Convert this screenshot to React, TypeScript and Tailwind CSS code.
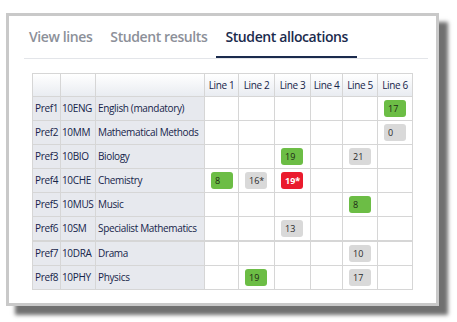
import React from "react";

type Badge = { line: number; value: string; tone: "green" | "gray" | "red" };

const rows: { pref: string; code: string; name: string; badges: Badge[] }[] = [
  { pref: "Pref1", code: "10ENG", name: "English (mandatory)", badges: [{ line: 6, value: "17", tone: "green" }] },
  { pref: "Pref2", code: "10MM", name: "Mathematical Methods", badges: [{ line: 6, value: "0", tone: "gray" }] },
  {
    pref: "Pref3",
    code: "10BIO",
    name: "Biology",
    badges: [
      { line: 3, value: "19", tone: "green" },
      { line: 5, value: "21", tone: "gray" },
    ],
  },
  {
    pref: "Pref4",
    code: "10CHE",
    name: "Chemistry",
    badges: [
      { line: 1, value: "8", tone: "green" },
      { line: 2, value: "16*", tone: "gray" },
      { line: 3, value: "19*", tone: "red" },
    ],
  },
  { pref: "Pref5", code: "10MUS", name: "Music", badges: [{ line: 5, value: "8", tone: "green" }] },
  { pref: "Pref6", code: "10SM", name: "Specialist Mathematics", badges: [{ line: 3, value: "13", tone: "gray" }] },
  { pref: "Pref7", code: "10DRA", name: "Drama", badges: [{ line: 5, value: "10", tone: "gray" }] },
  {
    pref: "Pref8",
    code: "10PHY",
    name: "Physics",
    badges: [
      { line: 2, value: "19", tone: "green" },
      { line: 5, value: "17", tone: "gray" },
    ],
  },
];

const lines = [1, 2, 3, 4, 5, 6];

const cols = "grid grid-cols-[27px_34px_108px_33px_35px_35px_31px_34px_34px] gap-px";

const toneClass = {
  green: "bg-[#6cbd45] text-[#1d2a16]",
  gray: "bg-[#d9d9d9] text-[#2a2a2a]",
  red: "bg-[#ea1b2d] text-white font-bold",
};

function Row({ row }: { row: (typeof rows)[number] }) {
  return (
    <>
      <div className="h-[23px] bg-[#e7e9ee] px-[2px] flex items-center">{row.pref}</div>
      <div className="h-[23px] bg-[#e7e9ee] px-[1px] flex items-center">{row.code}</div>
      <div className="h-[23px] bg-[#e7e9ee] px-[2px] flex items-center whitespace-nowrap">{row.name}</div>
      {lines.map((l) => {
        const b = row.badges.find((x) => x.line === l);
        return (
          <div key={l} className="h-[23px] bg-white pl-[6px] flex items-center">
            {b && (
              <span
                className={`w-[22px] h-[17px] rounded-[3px] pl-[4px] flex items-center text-[9px] tracking-normal leading-none ${toneClass[b.tone]}`}
              >
                {b.value}
              </span>
            )}
          </div>
        );
      })}
    </>
  );
}

export default function App() {
  return (
    <div className="w-[457px] h-[322px] bg-white pt-[13px] pl-[6px] font-['Open_Sans',sans-serif]">
      <div className="w-[433px] h-[293px] border-[3px] border-[#c9c9c9] bg-white shadow-[9px_9px_4px_#707070]">
        {/* Tabs */}
        <div className="flex pl-[11px] text-[14px] font-semibold tracking-[-0.4px]">
          <div className="h-[42px] px-[9px] pt-[11px] leading-[20px] text-[#8c9099]">View lines</div>
          <div className="h-[42px] px-[9px] pt-[11px] leading-[20px] text-[#8c9099]">Student results</div>
          <div className="h-[42px] px-[9px] pt-[11px] leading-[20px] text-[#1b2b4d] border-b-2 border-[#1b2b4d]">
            Student allocations
          </div>
        </div>
        <div className="ml-[15px] mr-[8px] h-px bg-[#e3e5e9]" />

        {/* Allocation table */}
        <div className="mt-[14px] ml-[23px] w-[381px] bg-[#d6d6d6] p-px flex flex-col gap-px text-[10px] font-medium tracking-[-0.35px] text-[#16244a]">
          <div className={cols}>
            {["", "", "", ...lines.map((l) => `Line ${l}`)].map((h, i) => (
              <div
                key={i}
                className="h-[22px] bg-gradient-to-b from-white to-[#e9ecf1] flex items-center justify-center whitespace-nowrap"
              >
                {h}
              </div>
            ))}
            {rows.slice(0, 6).map((r) => (
              <Row key={r.pref} row={r} />
            ))}
          </div>
          <div className={`${cols} mt-px`}>
            {rows.slice(6).map((r) => (
              <Row key={r.pref} row={r} />
            ))}
          </div>
        </div>
      </div>
    </div>
  );
}
